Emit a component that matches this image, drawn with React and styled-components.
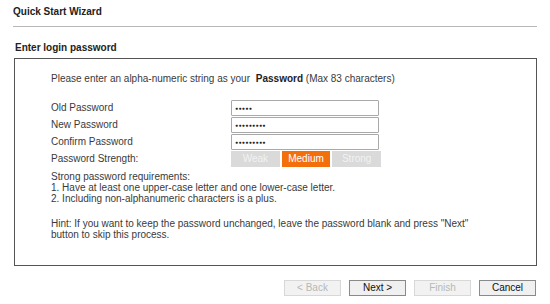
import React from 'react';
import styled, { createGlobalStyle } from 'styled-components';

const GlobalStyle = createGlobalStyle`
  html, body {
    margin: 0;
    padding: 0;
    background: #fff;
  }
  body {
    width: 550px;
    height: 304px;
    overflow: hidden;
    font-family: "Liberation Sans", Arial, sans-serif;
    font-size: 10px;
    color: #3a3a3a;
  }
`;

const Page = styled.div`
  display: flex;
  flex-direction: column;
  padding: 5px 13px 0 13px;
`;

const Title = styled.div`
  font-weight: bold;
  color: #222;
  height: 14px;
  line-height: 14px;
  padding-bottom: 7px;
  border-bottom: 1px solid #b8b8b8;
`;

const SectionTitle = styled.div`
  font-weight: bold;
  color: #222;
  margin-top: 14px;
  padding-left: 2px;
  line-height: 14px;
`;

const Panel = styled.div`
  margin: 3px 0 0 1px;
  width: 523px;
  height: 208px;
  border: 1px solid #555;
  box-sizing: border-box;
  padding: 13px 0 0 36px;
  display: flex;
  flex-direction: column;
`;

const Intro = styled.div`
  line-height: 14px;
  margin-bottom: 13px;

  & b {
    color: #222;
    margin-left: 3px;
  }
`;

const Form = styled.div`
  display: grid;
  grid-template-columns: 180px 150px;
  grid-auto-rows: 17px;
  align-items: center;
`;

const Label = styled.div`
  line-height: 14px;
`;

const PwBox = styled.div`
  height: 16px;
  box-sizing: border-box;
  border: 1px solid #a9a9a9;
  border-radius: 1px;
  padding-left: 3px;
  display: flex;
  align-items: center;
  font-size: 5px;
  letter-spacing: 0.4px;
  color: #222;
  width: 148px;
`;

const Strength = styled.div`
  display: flex;
  gap: 2px;
`;

const Level = styled.div`
  width: 49px;
  height: 16px;
  line-height: 16px;
  text-align: center;
  color: ${p => (p.$active ? '#fff' : '#f2f2f2')};
  background: ${p => (p.$active ? '#f36f0c' : '#dadada')};
`;

const Notes = styled.div`
  margin-top: 4px;
  line-height: 11px;
`;

const Hint = styled.div`
  margin-top: 14px;
  line-height: 11px;
`;

const Buttons = styled.div`
  display: flex;
  justify-content: flex-end;
  gap: 8px;
  margin-top: 14px;
  padding-right: 1px;
`;

const Button = styled.div`
  width: 57px;
  height: 16px;
  box-sizing: border-box;
  border: 1px solid ${p => (p.$disabled ? '#d8d8d8' : '#8a8a8a')};
  background: ${p => (p.$disabled ? '#f2f2f2' : '#f0f0f0')};
  color: ${p => (p.$disabled ? '#b8b8b8' : '#111')};
  text-align: center;
  line-height: 14px;
`;

const levels = ['Weak', 'Medium', 'Strong'];

export default function App() {
  return (
    <>
      <GlobalStyle />
      <Page>
        <Title>Quick Start Wizard</Title>
        <SectionTitle>Enter login password</SectionTitle>
        <Panel>
          <Intro>
            Please enter an alpha-numeric string as your <b>Password</b> (Max 83 characters)
          </Intro>
          <Form>
            <Label>Old Password</Label>
            <PwBox>●●●●●</PwBox>
            <Label>New Password</Label>
            <PwBox>●●●●●●●●●</PwBox>
            <Label>Confirm Password</Label>
            <PwBox>●●●●●●●●●</PwBox>
            <Label>Password Strength:</Label>
            <Strength>
              {levels.map(l => (
                <Level key={l} $active={l === 'Medium'}>{l}</Level>
              ))}
            </Strength>
          </Form>
          <Notes>
            Strong password requirements:
            <br />
            1. Have at least one upper-case letter and one lower-case letter.
            <br />
            2. Including non-alphanumeric characters is a plus.
          </Notes>
          <Hint>
            Hint: If you want to keep the password unchanged, leave the password blank and press "Next"
            <br />
            button to skip this process.
          </Hint>
        </Panel>
        <Buttons>
          <Button $disabled>&lt; Back</Button>
          <Button>Next &gt;</Button>
          <Button $disabled>Finish</Button>
          <Button>Cancel</Button>
        </Buttons>
      </Page>
    </>
  );
}
